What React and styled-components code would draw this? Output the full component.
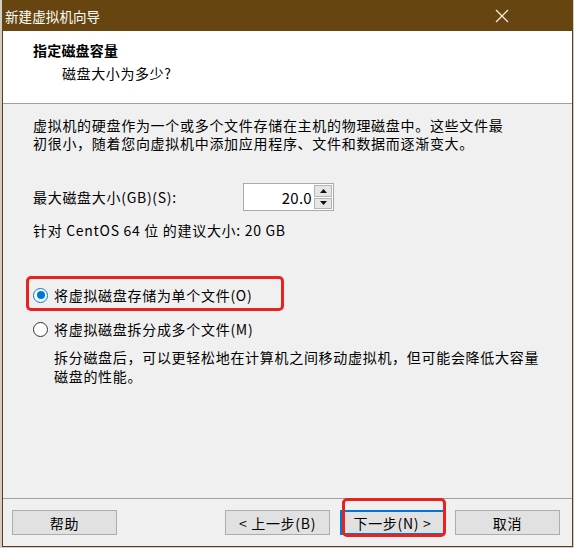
import styled, { createGlobalStyle } from "styled-components";

const GlobalStyle = createGlobalStyle`
    html, body {
        margin: 0;
        padding: 0;
        background: #d6cdc1;
    }
    body {
        font-family: "Noto Sans CJK SC", "Noto Sans", sans-serif;
        color: #000;
    }
`

const CloseIcon = () => (
    <svg width="14" height="14" viewBox="0 0 14 14">
        <path d="M1 1 L13 13 M13 1 L1 13" stroke="#f4ecdf" strokeWidth="1.3" fill="none" />
    </svg>
)

const Arrow = ({ up }) => (
    <svg width="7" height="4" viewBox="0 0 7 4">
        <path d={up ? "M0 4 L3.5 0 L7 4 Z" : "M0 0 L7 0 L3.5 4 Z"} fill="#111" />
    </svg>
)

const Radio = ({ checked, children }) => (
    <OptionRow>
        <RadioDot $checked={checked} />
        <span>{children}</span>
    </OptionRow>
)

const App = () => {
    return (
        <>
            <GlobalStyle />
            <Window>
                <TitleBar>
                    <TitleText>新建虚拟机向导</TitleText>
                    <CloseBtn><CloseIcon /></CloseBtn>
                </TitleBar>
                <Header>
                    <HeaderTitle>指定磁盘容量</HeaderTitle>
                    <HeaderSub>磁盘大小为多少?</HeaderSub>
                </Header>
                <Body>
                    <Para>
                        <Line>虚拟机的硬盘作为一个或多个文件存储在主机的物理磁盘中。这些文件最</Line>
                        <Line>初很小，随着您向虚拟机中添加应用程序、文件和数据而逐渐变大。</Line>
                    </Para>
                    <SizeRow>
                        <Label>最大磁盘大小(GB)(S):</Label>
                        <SpinBox>
                            <SpinValue>20.0</SpinValue>
                            <SpinButtons>
                                <SpinBtn><Arrow up /></SpinBtn>
                                <SpinBtn><Arrow /></SpinBtn>
                            </SpinButtons>
                        </SpinBox>
                    </SizeRow>
                    <Hint>针对 CentOS 64 位 的建议大小: 20 GB</Hint>
                    <Options>
                        <Marked>
                            <Radio checked>将虚拟磁盘存储为单个文件(O)</Radio>
                            <RedBox $l={-7} $t={-10} $w={258} $h={35} />
                        </Marked>
                        <Radio>将虚拟磁盘拆分成多个文件(M)</Radio>
                    </Options>
                    <Desc>
                        <Line $h={19}>拆分磁盘后，可以更轻松地在计算机之间移动虚拟机，但可能会降低大容量</Line>
                        <Line $h={19}>磁盘的性能。</Line>
                    </Desc>
                </Body>
                <Footer>
                    <Button>帮助</Button>
                    <Spacer />
                    <Button>&lt; 上一步(B)</Button>
                    <Marked>
                        <Button $primary>下一步(N) &gt;</Button>
                        <RedBox $l={2} $t={-12} $w={104} $h={39} />
                    </Marked>
                    <Button>取消</Button>
                </Footer>
            </Window>
        </>
    )
}

const Window = styled.div`
    margin-left: 2px;
    width: 571px;
    height: 547px;
    box-sizing: border-box;
    border: 1px solid #5a3f14;
    border-top: none;
    background: #f0f0f0;
    display: flex;
    flex-direction: column;
`
const TitleBar = styled.div`
    height: 31px;
    background: #674510;
    margin: 0 -1px;
    display: flex;
    align-items: center;
    justify-content: space-between;
    padding: 0 64px 0 3px;
    flex-shrink: 0;
`
const TitleText = styled.div`
    color: #fff;
    font-size: 13.5px;
    letter-spacing: 0.1px;
`
const CloseBtn = styled.div`
    display: flex;
    align-items: center;
    margin-top: 1px;
`
const Header = styled.div`
    height: 73px;
    background: #fff;
    border-bottom: 1px solid #a0a0a0;
    padding: 9px 0 0 30px;
    box-sizing: border-box;
    flex-shrink: 0;
`
const HeaderTitle = styled.div`
    font-size: 14px;
    font-weight: bold;
    line-height: 20px;
    letter-spacing: 0.2px;
`
const HeaderSub = styled.div`
    font-size: 14px;
    line-height: 20px;
    margin-top: 3px;
    padding-left: 29px;
    letter-spacing: 0.6px;
`
const Body = styled.div`
    padding: 12px 30px 0 30px;
    font-size: 14px;
    letter-spacing: 0.7px;
`
const Para = styled.div`
    display: flex;
    flex-direction: column;
`
const Line = styled.div`
    height: ${p => p.$h || 18}px;
    line-height: ${p => p.$h || 18}px;
    white-space: nowrap;
`
const SizeRow = styled.div`
    display: flex;
    align-items: center;
    height: 28px;
    margin-top: 31px;
`
const Label = styled.div`
    width: 210px;
`
const SpinBox = styled.div`
    width: 91px;
    height: 28px;
    box-sizing: border-box;
    background: #fff;
    border: 1px solid #a9a9a9;
    display: flex;
    align-items: center;
    padding: 1px 1px 1px 0;
`
const SpinValue = styled.div`
    flex: 1;
    text-align: right;
    font-size: 15px;
    letter-spacing: 0.3px;
    padding-right: 2px;
`
const SpinButtons = styled.div`
    display: flex;
    flex-direction: column;
    gap: 1px;
    width: 18px;
    height: 100%;
`
const SpinBtn = styled.div`
    flex: 1;
    background: #e6e6e6;
    border: 1px solid #b4b4b4;
    display: flex;
    align-items: center;
    justify-content: center;
`
const Hint = styled.div`
    margin-top: 10px;
    line-height: 18px;
`
const Options = styled.div`
    margin-top: 47px;
    display: flex;
    flex-direction: column;
    gap: 16px;
`
const Marked = styled.div`
    position: relative;
`
const RedBox = styled.div`
    position: absolute;
    left: ${p => p.$l}px;
    top: ${p => p.$t}px;
    width: ${p => p.$w}px;
    height: ${p => p.$h}px;
    box-sizing: border-box;
    border: 3px solid #e8231f;
    border-radius: 5px;
    pointer-events: none;
`
const OptionRow = styled.div`
    display: flex;
    align-items: center;
    height: 18px;
    gap: 6px;
`
const RadioDot = styled.span`
    width: 15px;
    height: 15px;
    box-sizing: border-box;
    border-radius: 50%;
    border: 1px solid ${p => (p.$checked ? "#0078d7" : "#333")};
    background: #fff;
    display: flex;
    align-items: center;
    justify-content: center;
    &::after {
        content: "";
        width: 8px;
        height: 8px;
        border-radius: 50%;
        background: ${p => (p.$checked ? "#0078d7" : "transparent")};
    }
`
const Desc = styled.div`
    margin: 10px 0 0 21px;
    display: flex;
    flex-direction: column;
`
const Footer = styled.div`
    margin-top: auto;
    border-top: 1px solid #a0a0a0;
    padding: 11px 12px 11px 9px;
    display: flex;
    align-items: center;
    gap: 10px;
`
const Spacer = styled.div`
    flex: 1;
`
const Button = styled.div`
    width: 105px;
    height: 25px;
    box-sizing: border-box;
    background: #e1e1e1;
    border: 1px solid ${p => (p.$primary ? "#0078d7" : "#adadad")};
    box-shadow: ${p => (p.$primary ? "inset 0 0 0 1px #0078d7" : "none")};
    display: flex;
    align-items: center;
    justify-content: center;
    font-size: 14px;
    letter-spacing: 0.7px;
`

export default App;
